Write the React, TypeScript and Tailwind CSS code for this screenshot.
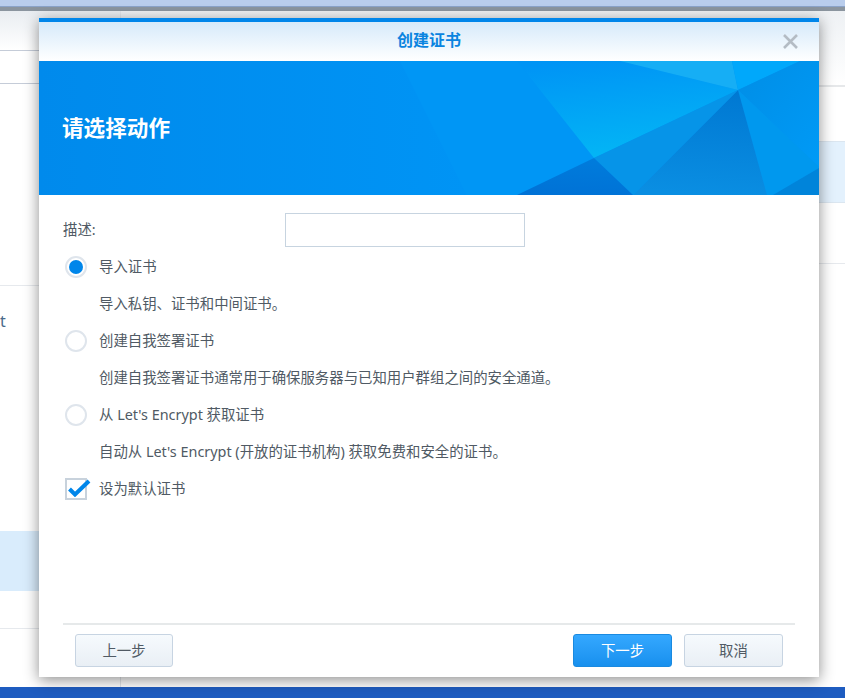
import React from 'react';

type OptionProps = {
    label: string;
    hint: string;
    checked?: boolean;
};

// radio row plus its hint line, each 37px tall
const RadioOption: React.FC<OptionProps> = ({ label, hint, checked }) => (
    <>
        <div className="flex h-[37px] items-center pl-[2px]">
            <span className="flex h-[22px] w-[22px] items-center justify-center rounded-full border-2 border-[#dfe5ec] bg-white">
                {checked && <span className="h-[14px] w-[14px] rounded-full bg-[#0086ea]" />}
            </span>
            <span className="ml-[12px]">{label}</span>
        </div>
        <div className="flex h-[37px] items-center pl-[36px]">{hint}</div>
    </>
);

const Banner = () => (
    <svg className="absolute inset-0 h-full w-full" viewBox="0 0 780 134" preserveAspectRatio="none">
        <defs>
            <linearGradient id="base" x1="0" y1="0" x2="1" y2="0">
                <stop offset="0" stopColor="#008aec" />
                <stop offset="0.55" stopColor="#0094f5" />
                <stop offset="1" stopColor="#0096f2" />
            </linearGradient>
            <linearGradient id="mid" gradientUnits="userSpaceOnUse" x1="530" y1="0" x2="540" y2="95">
                <stop offset="0" stopColor="#0094f5" />
                <stop offset="1" stopColor="#03b4f5" />
            </linearGradient>
            <linearGradient id="dark" x1="0.7" y1="0" x2="0.6" y2="1">
                <stop offset="0" stopColor="#0078d2" />
                <stop offset="1" stopColor="#0a8ee2" />
            </linearGradient>
            <linearGradient id="low" x1="0.6" y1="0" x2="0.4" y2="1">
                <stop offset="0" stopColor="#007cdc" />
                <stop offset="1" stopColor="#0072d6" />
            </linearGradient>
            <linearGradient id="side" x1="0" y1="0" x2="1" y2="1">
                <stop offset="0" stopColor="#008ee6" />
                <stop offset="1" stopColor="#009af6" />
            </linearGradient>
        </defs>
        <rect width="780" height="134" fill="url(#base)" />
        <polygon points="361,0 478,0 555,97 478,134 428,134" fill="#0096f5" />
        <polygon points="478,0 581,0 699,29 555,97" fill="url(#mid)" />
        <polygon points="581,0 693,0 699,29" fill="#16aef5" />
        <polygon points="693,0 761,0 699,29" fill="#00a8fb" />
        <polygon points="761,0 780,0 780,106 699,29" fill="url(#side)" />
        <polygon points="699,29 780,106 780,107 734,134 728,134" fill="#0098ee" />
        <polygon points="780,107 780,134 734,134" fill="#0084da" />
        <polygon points="699,29 728,134 594,134" fill="url(#dark)" />
        <polygon points="699,29 594,134 555,97" fill="#0694e8" />
        <polygon points="555,97 594,134 478,134" fill="url(#low)" />
    </svg>
);

export default function App() {
    return (
        <div className="relative h-[698px] w-[845px] overflow-hidden bg-white font-['Noto_Sans','Noto_Sans_CJK_SC',sans-serif] text-[14.4px] text-[#505a64]">
            {/* page behind the dialog */}
            <div className="flex h-full flex-col">
                <div className="h-[6px] bg-[#b9cdec]" />
                <div className="h-[5px] border-t border-[#8ba3c8] bg-[#8b959f]" />
                <div className="flex flex-1">
                    <div className="flex w-[121px] flex-col border-r border-[#e3e6ea]">
                        <div className="h-[40px] border-b border-[#c5ccd8] bg-gradient-to-b from-[#e9edf1] to-white" />
                        <div className="h-[33px] border-b border-[#c5ccd8]" />
                        <div className="h-[202px] border-b border-[#e6e9ed]" />
                        <div className="h-[70px] text-[16px] leading-[70px] text-[#4a6a8a]">t</div>
                        <div className="h-[175px]" />
                        <div className="h-[60px] bg-[#d9ecfc]" />
                        <div className="h-[38px] border-b border-[#e6e9ed]" />
                    </div>
                    <div className="flex flex-1 flex-col">
                        <div className="h-[76px] border-b-2 border-[#e6e8ea] bg-gradient-to-b from-[#eef1f4] to-white" />
                        <div className="h-[54px]" />
                        <div className="h-[62px] border-y border-[#dbe6f0] bg-[#e3f1fd]" />
                        <div className="h-[61px] border-b border-[#e6e9ed]" />
                    </div>
                </div>
                <div className="h-[11px] bg-[#1e5cc0]" />
            </div>

            {/* dialog */}
            <div className="absolute left-[39px] top-[18px] flex h-[659px] w-[780px] flex-col border-t-4 border-[#0086ea] bg-white shadow-[0_3px_14px_rgba(0,0,0,0.45)]">
                <div className="relative flex h-[39px] items-center justify-center bg-gradient-to-b from-[#d6eafa] to-white pb-[4px]">
                    <span className="text-[16px] font-bold text-[#0a84e0]">创建证书</span>
                    <svg className="absolute right-[21px] top-[12px] h-[15px] w-[15px]" viewBox="0 0 15 15">
                        <path d="M1 1 L14 14 M14 1 L1 14" stroke="#b4bcc4" strokeWidth="2.6" fill="none" />
                    </svg>
                </div>
                <div className="relative flex h-[134px] items-center px-[24px]">
                    <Banner />
                    <h1 className="relative -ml-[1px] text-[21.6px] font-bold text-white">请选择动作</h1>
                </div>

                <div className="flex flex-1 flex-col px-[24px] pt-[18px]">
                    <div className="mb-[1px] flex h-[34px] items-center">
                        <label className="w-[222px]">描述:</label>
                        <input className="h-[34px] w-[240px] border border-[#c7d4e0] bg-white" />
                    </div>
                    <RadioOption label="导入证书" hint="导入私钥、证书和中间证书。" checked />
                    <RadioOption label="创建自我签署证书" hint="创建自我签署证书通常用于确保服务器与已知用户群组之间的安全通道。" />
                    <RadioOption label="从 Let's Encrypt 获取证书" hint="自动从 Let's Encrypt (开放的证书机构) 获取免费和安全的证书。" />
                    <div className="flex h-[37px] items-center pl-[2px]">
                        <span className="relative h-[22px] w-[22px] border-2 border-[#c8d2dc] bg-white">
                            <svg className="absolute left-[1px] top-[-5px] h-[22px] w-[24px]" viewBox="0 0 24 22">
                                <path d="M1.5 14 L7 19.5 L21 6" stroke="#0086ea" strokeWidth="4" fill="none" />
                            </svg>
                        </span>
                        <span className="ml-[12px]">设为默认证书</span>
                    </div>
                </div>

                <div className="mx-[24px] flex h-[54px] items-start justify-between border-t-2 border-[#e6e9ea] px-[12px] pt-[9px]">
                    <button className="h-[33px] w-[98px] rounded-[3px] border border-[#c7d4e2] bg-gradient-to-b from-[#f6fafd] to-[#e9eff5]">上一步</button>
                    <div className="flex gap-[12px]">
                        <button className="h-[33px] w-[99px] rounded-[3px] border border-[#1a8ae0] bg-gradient-to-b from-[#34a8ff] to-[#1790ee] text-white">下一步</button>
                        <button className="h-[33px] w-[99px] rounded-[3px] border border-[#c7d4e2] bg-gradient-to-b from-[#f6fafd] to-[#e9eff5]">取消</button>
                    </div>
                </div>
            </div>
        </div>
    );
}
